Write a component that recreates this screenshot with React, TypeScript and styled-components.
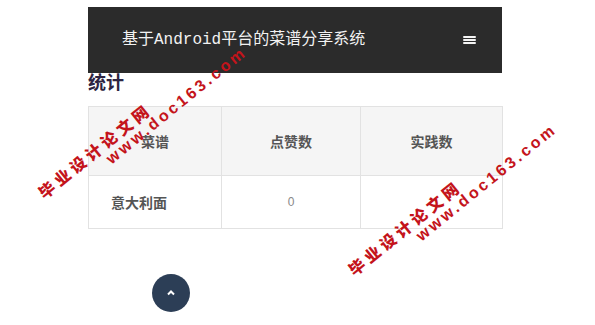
import React from 'react';
import styled, { createGlobalStyle } from 'styled-components';

const GlobalStyle = createGlobalStyle`
  html, body {
    margin: 0;
    padding: 0;
    background: #fff;
  }
  body {
    font-family: "Noto Sans CJK SC", "Liberation Sans", sans-serif;
    color: #555;
  }
`;

const Page = styled.div`
  width: 414px;
  margin-left: 88px;
  padding-top: 7px;
`;

const NavBar = styled.header`
  height: 66px;
  background: #2b2b2b;
  display: flex;
  align-items: center;
  justify-content: space-between;
  padding: 0 26px 0 34px;
  box-sizing: border-box;
`;

const Brand = styled.div`
  font-family: "Liberation Mono", "Noto Sans CJK SC", monospace;
  font-size: 16px;
  color: #f2f2f2;
  line-height: 20px;
`;

const MenuButton = styled.div`
  width: 13px;
  display: flex;
  flex-direction: column;
  gap: 1px;

  span {
    height: 2px;
    background: #f4f4f4;
    border-radius: 1px;
  }
`;

const Title = styled.h3`
  margin: 0 0 17px;
  font-size: 18px;
  line-height: 16px;
  font-weight: bold;
  color: #2d2441;
`;

const Table = styled.table`
  width: 414px;
  border-collapse: collapse;
  table-layout: fixed;
  border: 1px solid #dcdcdc;
`;

const HeadCell = styled.th`
  height: 68px;
  background: #f5f5f5;
  border: 1px solid #e2e2e2;
  font-size: 14px;
  font-weight: bold;
  color: #555;
  text-align: center;
  padding: 0;
`;

const Cell = styled.td<{ $strong?: boolean }>`
  height: 52px;
  border: 1px solid #e2e2e2;
  padding: 0;
  font-size: ${(p) => (p.$strong ? '14px' : '12px')};
  font-weight: ${(p) => (p.$strong ? 'bold' : 'normal')};
  color: ${(p) => (p.$strong ? '#555' : '#888')};
  text-align: ${(p) => (p.$strong ? 'left' : 'center')};
  padding-left: ${(p) => (p.$strong ? '22px' : '0')};
  font-family: ${(p) =>
    p.$strong ? '"Noto Sans CJK SC", sans-serif' : '"Liberation Sans", sans-serif'};
`;

const TopButton = styled.button`
  position: fixed;
  left: 152px;
  top: 274px;
  width: 38px;
  height: 38px;
  border-radius: 50%;
  border: none;
  padding: 0;
  background: #2c3e56;
  display: flex;
  align-items: center;
  justify-content: center;
`;

const Watermark = styled.div`
  position: absolute;
  transform: rotate(-39deg);
  transform-origin: 0 0;
  color: #c4141b;
  font-weight: bold;
  white-space: nowrap;
  pointer-events: none;
`;

const MarkCn = styled.div`
  font-family: "Noto Sans CJK SC", sans-serif;
  font-size: 16px;
  line-height: 16px;
  letter-spacing: 4px;
  font-weight: 900;
`;

const MarkUrl = styled.div`
  font-family: "Liberation Sans", sans-serif;
  font-size: 16px;
  line-height: 17px;
  letter-spacing: 3px;
  padding-left: 74px;
`;

function Mark({ left, top }: { left: number; top: number }) {
  return (
    <Watermark style={{ left, top }}>
      <MarkCn>毕业设计论文网</MarkCn>
      <MarkUrl>www.doc163.com</MarkUrl>
    </Watermark>
  );
}

export default function App() {
  return (
    <>
      <GlobalStyle />
      <Page>
        <NavBar>
          <Brand>基于Android平台的菜谱分享系统</Brand>
          <MenuButton>
            <span />
            <span />
            <span />
          </MenuButton>
        </NavBar>
        <Title>统计</Title>
        <Table>
          <colgroup>
            <col style={{ width: 133 }} />
            <col style={{ width: 139 }} />
            <col style={{ width: 142 }} />
          </colgroup>
          <thead>
            <tr>
              <HeadCell>菜谱</HeadCell>
              <HeadCell>点赞数</HeadCell>
              <HeadCell>实践数</HeadCell>
            </tr>
          </thead>
          <tbody>
            <tr>
              <Cell $strong>意大利面</Cell>
              <Cell>0</Cell>
              <Cell></Cell>
            </tr>
          </tbody>
        </Table>
      </Page>
      <TopButton aria-label="top">
        <svg width="10" height="8" viewBox="0 0 10 8">
          <polyline points="2,5.5 5,2.5 8,5.5" fill="none" stroke="#fff" strokeWidth="2" />
        </svg>
      </TopButton>
      <Mark left={35} top={188} />
      <Mark left={345} top={265} />
    </>
  );
}
